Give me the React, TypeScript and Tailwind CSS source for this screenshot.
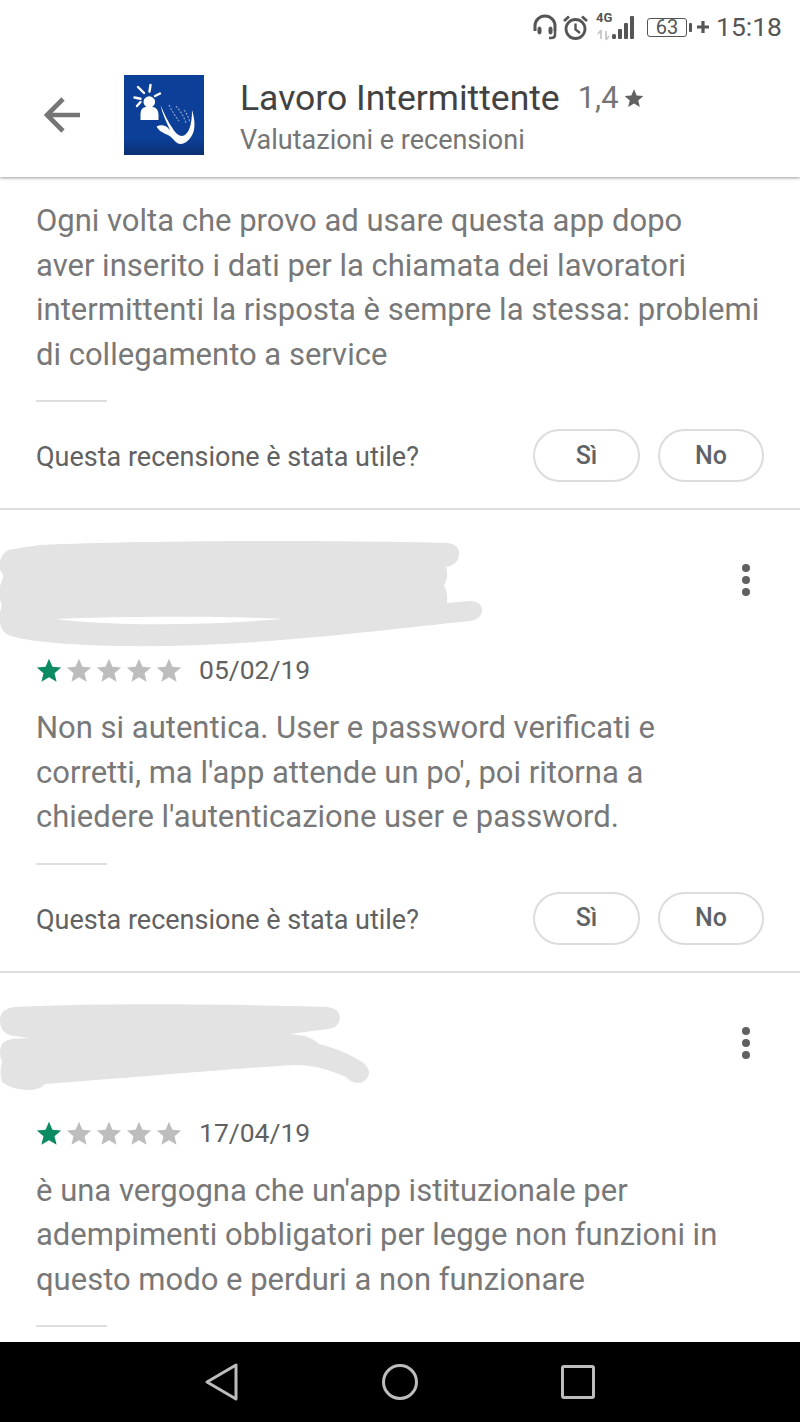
const STAR = 'M12 1.5l3.2 7.4 8 .7-6.1 5.3 1.9 7.9L12 18.6l-7 4.2 1.9-7.9L.8 9.6l8-.7z';

function Star({ color }: { color: string }) {
  return (
    <svg width="26" height="26" viewBox="0 0 24 24" className="block">
      <path d={STAR} fill={color} />
    </svg>
  );
}

function Rating({ date }: { date: string }) {
  return (
    <div className="flex h-[40px] items-center">
      <div className="flex gap-[4px]">
        <Star color="#0b8a63" />
        <Star color="#bdbdbd" />
        <Star color="#bdbdbd" />
        <Star color="#bdbdbd" />
        <Star color="#bdbdbd" />
      </div>
      <span className="ml-[17px] text-[26.5px] leading-[40px] text-[#616161]">{date}</span>
    </div>
  );
}

function Helpful() {
  return (
    <>
      <div className="mt-[23px] h-[2px] w-[71px] bg-[#dedede]" />
      <div className="mt-[27px] flex items-center justify-between">
        <span className="pt-[3px] text-[27px] leading-[50px] text-[#616161]">Questa recensione è stata utile?</span>
        <div className="flex gap-[18px]">
          <button className="h-[53px] w-[107px] rounded-full border-2 border-[#dcdcdc] text-[25px] font-medium text-[#5f6368]">Sì</button>
          <button className="h-[53px] w-[106px] rounded-full border-2 border-[#dcdcdc] text-[25px] font-medium text-[#5f6368]">No</button>
        </div>
      </div>
    </>
  );
}

function Kebab() {
  return (
    <div className="flex flex-col gap-[4px] pt-[24px] pr-[14px]">
      <div className="h-[8px] w-[8px] rounded-full bg-[#616161]" />
      <div className="h-[8px] w-[8px] rounded-full bg-[#616161]" />
      <div className="h-[8px] w-[8px] rounded-full bg-[#616161]" />
    </div>
  );
}

function ReviewText({ lines }: { lines: string[] }) {
  return (
    <p className="pt-[1px] text-[31px] leading-[44.5px] text-[#787878]">
      {lines.map((l) => (
        <span key={l} className="block whitespace-nowrap">{l}</span>
      ))}
    </p>
  );
}

function Scribble1() {
  return (
    <svg width="484" height="110" viewBox="0 540 484 110" className="block -ml-[36px]">
      <path
        fillRule="evenodd"
        fill="#e3e3e3"
        d="M40 545C150 540 350 540 448 543Q460 545 459 555Q458 565 446 567Q449 576 444 586Q448 592 447 603L470 601Q482 601 482 611Q481 619 470 621C380 630 250 648 120 646C60 645 20 640 8 635Q-2 630 0 612Q3 604 0 600Q-2 590 2 580Q5 575 0 570Q-2 556 8 550Q25 547 40 545ZM55 619C120 616 230 616 282 619C200 626 110 626 55 619Z"
      />
    </svg>
  );
}

function Scribble2() {
  return (
    <svg width="372" height="110" viewBox="0 1001 372 110" className="block -ml-[36px]">
      <path
        fill="#e3e3e3"
        d="M14 1005C120 1000 260 1003 328 1005Q340 1007 340 1016Q339 1026 328 1027L290 1032L305 1034Q314 1037 319 1042C335 1046 350 1052 362 1060Q370 1066 369 1072Q366 1081 357 1081Q350 1080 346 1075C330 1068 315 1063 296 1063C240 1066 190 1071 45 1082Q40 1088 28 1088Q10 1087 2 1080Q-1 1070 2 1060Q-2 1050 2 1042Q5 1036 30 1036L14 1034Q0 1032 0 1018Q0 1007 14 1005Z"
      />
    </svg>
  );
}

function StatusBar() {
  return (
    <div className="flex h-[54px] items-center justify-end pr-[18px] text-[#555555]">
      <svg width="26" height="26" viewBox="0 0 26 26" fill="none" stroke="#555555" strokeWidth="3" className="block">
        <path d="M3 17v-5a10 10 0 0 1 20 0v5" />
        <rect x="6" y="13" width="3" height="7" rx="1.5" fill="#555555" strokeWidth="1" />
        <rect x="17" y="13" width="3" height="7" rx="1.5" fill="#555555" strokeWidth="1" />
        <path d="M23 17v4q0 3-4 3h-2" strokeWidth="2.5" />
      </svg>
      <svg width="27" height="27" viewBox="0 0 27 27" fill="none" stroke="#555555" className="ml-[4px] block">
        <circle cx="13.5" cy="15" r="9.5" strokeWidth="2.8" />
        <path d="M13.5 9.5V15.5L18 19" strokeWidth="2.4" />
        <path d="M2 7L7 2.5M25 7L20 2.5" strokeWidth="2.8" />
      </svg>
      <div className="relative ml-[7px] h-[27px] w-[19px]">
        <span className="absolute -top-[3px] left-0 text-[13px] leading-[14px] font-bold text-[#555555]">4G</span>
        <svg width="16" height="12" viewBox="0 0 16 12" className="absolute bottom-0 left-0 block">
          <path d="M5 1v9M2 5l3-4M10 2v9M10 11l3-4" stroke="#c8c8c8" strokeWidth="1.8" fill="none" />
        </svg>
      </div>
      <svg width="24" height="25" viewBox="0 0 24 25" fill="#555555" className="-ml-[3px] block">
        <rect x="0" y="19" width="4" height="5" rx="1.5" />
        <rect x="6" y="14" width="4" height="10" rx="1" />
        <rect x="12" y="8" width="4" height="16" rx="1" />
        <rect x="18" y="1" width="4" height="23" rx="1" />
      </svg>
      <div className="ml-[11px] flex h-[19px] w-[40px] items-center justify-center rounded-[3px] border border-[#555555] text-[20px] leading-none">63</div>
      <div className="ml-[2px] h-[9px] w-[3px] rounded-[1px] bg-[#555555]" />
      <svg width="14" height="14" viewBox="0 0 14 14" className="ml-[4px] block">
        <path d="M7 1v12M1 7h12" stroke="#555555" strokeWidth="3.2" />
      </svg>
      <span className="ml-[6px] text-[26.5px] leading-none text-[#555555]">15:18</span>
    </div>
  );
}

function AppIcon() {
  return (
    <svg width="80" height="80" viewBox="0 0 80 80" className="block">
      <defs>
        <linearGradient id="blue" x1="0" y1="0" x2="0" y2="1">
          <stop offset="0.8" stopColor="#0c3f97" />
          <stop offset="1" stopColor="#0a3070" />
        </linearGradient>
      </defs>
      <rect width="80" height="80" fill="url(#blue)" />
      <circle cx="25.3" cy="27" r="5.8" fill="#fff" />
      <path d="M16.5 45v-6q0-6 5-7h7.5q5 1 5.5 7v6z" fill="#fff" />
      <path d="M14 12l6 6M26.5 10l-1 6.5M36 18.500l-5 2.500M10.500 22.500l6 1.200M13 31l3.500-4" stroke="#fff" strokeWidth="2.4" strokeLinecap="round" />
      <path d="M32.5 51.5C36 49.5 40 50 43 52L46 55C42 46 38 38 36.5 30C40 38 44 47 49 54C52 59 56 62 60 60.5C65 58 68 50 68 35C71 45 72 55 67 62C63 68 58 70 54 68.5C50 66 48 62 44 60C39 58 35 56 32.5 51.5Z" fill="#fff" />
      <path d="M45 30C48 36 51 41 55 46M52 31C56 36 60 41 62 48M60 35C63 39 65 43 66 48" stroke="#8aa4d6" strokeWidth="1.2" strokeDasharray="2 1.500" fill="none" />
    </svg>
  );
}

export default function App() {
  return (
    <div className="flex h-[1422px] w-[800px] flex-col overflow-hidden bg-white font-['Roboto',sans-serif]">
      <div className="relative z-10 bg-white shadow-[0_1px_3px_rgba(0,0,0,0.4)]">
        <StatusBar />
        <div className="flex h-[123px] items-start pl-[44px]">
          <svg width="38" height="38" viewBox="0 0 38 38" fill="none" stroke="#757575" strokeWidth="4.6" className="mt-[42px] block">
            <path d="M36 19H4M19 3L3 19l16 16" />
          </svg>
          <div className="mt-[21px] ml-[42px]">
            <AppIcon />
          </div>
          <div className="mt-[21px] ml-[36px]">
            <div className="flex items-center">
              <span className="text-[35.5px] leading-[46px] text-[#424242]">Lavoro Intermittente</span>
              <span className="ml-[18px] text-[31px] leading-[46px] text-[#757575]">1,4</span>
              <svg width="20" height="20" viewBox="0 0 24 24" className="ml-[5px] block">
                <path d={STAR} fill="#616161" />
              </svg>
            </div>
            <div className="mt-[1px] text-[27px] leading-[36px] text-[#757575]">Valutazioni e recensioni</div>
          </div>
        </div>
      </div>

      <main className="min-h-0 flex-1 overflow-hidden">
        <section className="border-b-2 border-[#dedede] px-[36px] pt-[21px] pb-[26px]">
          <ReviewText
            lines={[
              'Ogni volta che provo ad usare questa app dopo',
              'aver inserito i dati per la chiamata dei lavoratori',
              'intermittenti la risposta è sempre la stessa: problemi',
              'di collegamento a service',
            ]}
          />
          <Helpful />
        </section>

        <section className="border-b-2 border-[#dedede] px-[36px] pt-[30px] pb-[26px]">
          <div className="flex justify-between">
            <Scribble1 />
            <Kebab />
          </div>
          <Rating date="05/02/19" />
          <div className="mt-[15px]">
            <ReviewText
              lines={[
                'Non si autentica. User e password verificati e',
                "corretti, ma l'app attende un po', poi ritorna a",
                "chiedere l'autenticazione user e password.",
              ]}
            />
          </div>
          <Helpful />
        </section>

        <section className="px-[36px] pt-[30px]">
          <div className="flex justify-between">
            <Scribble2 />
            <Kebab />
          </div>
          <Rating date="17/04/19" />
          <div className="mt-[15px]">
            <ReviewText
              lines={[
                "è una vergogna che un'app istituzionale per",
                'adempimenti obbligatori per legge non funzioni in',
                'questo modo e perduri a non funzionare',
              ]}
            />
          </div>
          <div className="mt-[23px] h-[2px] w-[71px] bg-[#dedede]" />
        </section>
      </main>

      <nav className="flex h-[80px] items-center justify-center gap-[142px] bg-black">
        <svg width="36" height="40" viewBox="0 0 36 40" fill="none" stroke="#bdbdbd" strokeWidth="3" strokeLinejoin="round" className="block">
          <path d="M3 20L32 3V37Z" />
        </svg>
        <svg width="36" height="36" viewBox="0 0 36 36" fill="none" stroke="#bdbdbd" strokeWidth="3" className="block">
          <circle cx="18" cy="18" r="16.5" />
        </svg>
        <svg width="36" height="36" viewBox="0 0 36 36" fill="none" stroke="#bdbdbd" strokeWidth="3" strokeLinejoin="round" className="block">
          <rect x="2.5" y="2.5" width="31" height="31" rx="1.5" />
        </svg>
      </nav>
    </div>
  );
}
